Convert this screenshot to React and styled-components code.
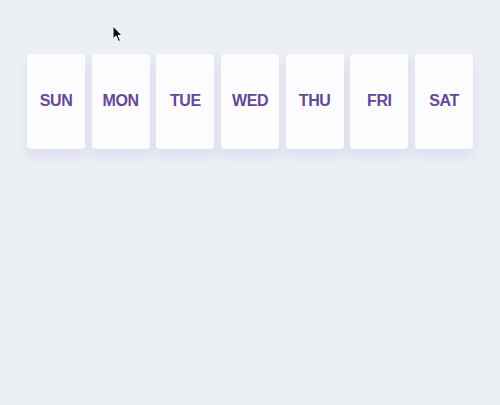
import React from "react";
import styled, { createGlobalStyle } from "styled-components";

const Global = createGlobalStyle`
  html, body { margin: 0; padding: 0; }
  body {
    background: #edf0f3;
    font-family: "Liberation Sans", Arial, sans-serif;
  }
`;

const Page = styled.div`
  position: relative;
  width: 500px;
  height: 405px;
  background: #edf0f3;
  padding-top: 54px;
  box-sizing: border-box;
`;

const Row = styled.div`
  display: flex;
  gap: 6.67px;
  padding: 0 27px;
`;

const Card = styled.div`
  flex: 1;
  height: 95px;
  padding-bottom: 1px;
  box-sizing: border-box;
  background: #fdfcff;
  border-radius: 4px;
  box-shadow: 0 7px 12px rgba(130, 110, 230, 0.16);
  display: flex;
  align-items: center;
  justify-content: center;
  color: #654898;
  font-weight: 700;
  font-size: 16px;
  letter-spacing: -0.4px;
`;

const Cursor = styled.svg`
  position: absolute;
  left: 112px;
  top: 25px;
`;

const days = ["SUN", "MON", "TUE", "WED", "THU", "FRI", "SAT"];

export default function App() {
  return (
    <>
      <Global />
      <Page>
        <Row>
          {days.map((d) => (
            <Card key={d}>{d}</Card>
          ))}
        </Row>
        <Cursor width="12" height="18" viewBox="0 0 12 18">
          <path d="M1 1 L1 14 L4 11 L6.5 16.5 L8.5 15.5 L6 10.5 L10 10.5 Z" fill="#111" stroke="#fff" strokeWidth="1" />
        </Cursor>
      </Page>
    </>
  );
}
